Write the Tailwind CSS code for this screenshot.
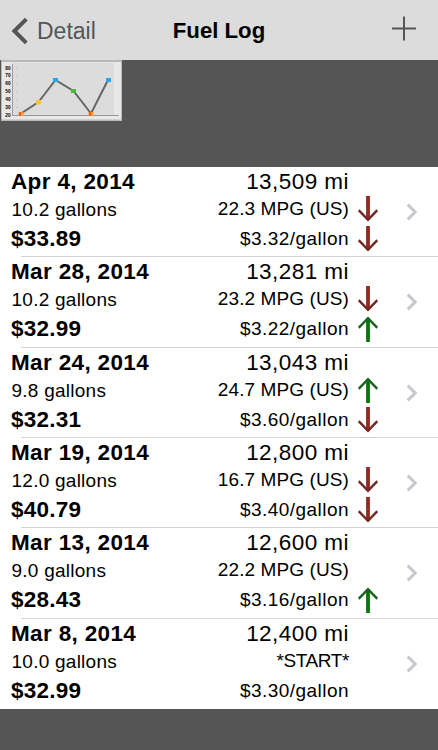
<!DOCTYPE html>
<html lang="en">
  <head>
    <meta charset="UTF-8" />
    <meta name="viewport" content="width=device-width, initial-scale=1.0" />
    <title>Fuel Log</title>
    <script src="https://cdn.jsdelivr.net/npm/@tailwindcss/browser@4"></script>
  </head>
  <body class="bg-[#555555] font-['Liberation_Sans',Arial,sans-serif] text-black h-[750px] overflow-hidden">
    <header class="grid grid-cols-[146px_146px_146px] h-[60px] bg-[#dcdcdc]">
      <a class="flex items-center pl-[11px] text-[#555555]">
        <svg class="w-[17px] h-[28px]" viewBox="0 0 17 28" fill="none" stroke="#555555" stroke-width="4">
          <path d="M15.3 2.2L3.4 14L15.3 25.8" />
        </svg>
        <span class="ml-[9px] text-[23px] leading-[60px]">Detail</span>
      </a>
      <h1 class="font-bold text-[22.2px] leading-[61px] text-center whitespace-nowrap">Fuel Log</h1>
      <button class="flex justify-end items-start pt-[16px] pr-[22px]">
        <svg class="w-[24px] h-[25px]" viewBox="0 0 24 25" stroke="#555555" stroke-width="2">
          <path d="M12 0.5V24.5M0 12.5H24" />
        </svg>
      </button>
    </header>
    <div class="h-[107px] pl-px">
      <!-- mileage chart thumbnail -->
      <svg class="block" width="121" height="61" viewBox="0 0 121 61">
        <rect x="0" y="0" width="121" height="61" fill="#b9b9b9" />
        <rect x="1" y="2" width="119" height="57.5" fill="#e8e8e8" />
        <rect x="11" y="3" width="102" height="52" fill="#dcdcdc" />
        <path d="M11.5 4V56M11 55.5H118" stroke="#999999" fill="none" />
        <path d="M15 7.5h2M15 15.5h2M15 23.5h2M15 31.5h2M15 39.5h2M15 47.5h2" stroke="#c4c4c4" />
        <g font-family="Liberation Sans, Arial, sans-serif" font-size="4.8" font-weight="bold" text-anchor="end">
          <text x="9.6" y="9.5">80</text>
          <text x="9.6" y="17.3">70</text>
          <text x="9.6" y="25.3">60</text>
          <text x="9.6" y="33.2">50</text>
          <text x="9.6" y="41.2">40</text>
          <text x="9.6" y="49.2">30</text>
          <text x="9.6" y="57">20</text>
        </g>
        <path d="M20 53.5L37.5 42L54.5 20L72.5 31L90 53.5L107 20" fill="none" stroke="#666666" stroke-width="2" />
        <g>
          <path d="M17.5 52h5v4h-5zM87.5 52h5v4h-5z" fill="#f79a2c" />
          <path d="M18 52h2v4h-2zM88 52h2v4h-2z" fill="#ee582c" />
          <path d="M35 40h5v4.5h-5z" fill="#f9c32b" />
          <path d="M52 18h5v4h-5zM105 18h5v4h-5z" fill="#26a5f2" />
          <path d="M70 29h5v4h-5z" fill="#45bd35" />
        </g>
      </svg>
    </div>
    <ul id="log" class="bg-white h-[542px]"></ul>
    <script>
      const entries = [
        { date: 'Apr 4, 2014', miles: '13,509', gallons: '10.2', mpg: '22.3 MPG (US)', total: '$33.89', price: '$3.32', trends: ['down', 'down'] },
        { date: 'Mar 28, 2014', miles: '13,281', gallons: '10.2', mpg: '23.2 MPG (US)', total: '$32.99', price: '$3.22', trends: ['down', 'up'] },
        { date: 'Mar 24, 2014', miles: '13,043', gallons: '9.8', mpg: '24.7 MPG (US)', total: '$32.31', price: '$3.60', trends: ['up', 'down'] },
        { date: 'Mar 19, 2014', miles: '12,800', gallons: '12.0', mpg: '16.7 MPG (US)', total: '$40.79', price: '$3.40', trends: ['down', 'down'] },
        { date: 'Mar 13, 2014', miles: '12,600', gallons: '9.0', mpg: '22.2 MPG (US)', total: '$28.43', price: '$3.16', trends: ['', 'up'] },
        { date: 'Mar 8, 2014', miles: '12,400', gallons: '10.0', mpg: '*START*', total: '$32.99', price: '$3.30', trends: ['', ''] },
      ];

      const arrows = {
        down: `<svg class="block" width="20" height="26" viewBox="0 0 20 26" fill="none">
          <path d="M10 0V24" stroke="#92281f" stroke-width="3.8" />
          <path d="M0.7 14.2L10 23.8L19.3 14.2" stroke="#702925" stroke-width="2.4" />
        </svg>`,
        up: `<svg class="block" width="20" height="26" viewBox="0 0 20 26" fill="none">
          <path d="M10 26V2" stroke="#087508" stroke-width="3.8" />
          <path d="M0.7 11.8L10 2.2L19.3 11.8" stroke="#1a6320" stroke-width="2.4" />
        </svg>`,
        '': '',
      };

      document.getElementById('log').innerHTML = entries.map((e, i) => `
        <li class="h-[90.33px]">
          <div class="flex h-[89.33px] pl-[11px]">
            <div class="w-[160px]">
              <p class="font-bold text-[22.5px] leading-[30px] tracking-[0.35px]">${e.date}</p>
              <p class="pl-[0.5px] text-[19px] leading-[25px] tracking-[0.25px]">${e.gallons} gallons</p>
              <p class="font-bold text-[22.5px] leading-[34px] tracking-[0.25px]">${e.total}</p>
            </div>
            <div class="w-[178px] text-right">
              <p class="text-[22.5px] leading-[29px] tracking-[0.45px]">${e.miles} mi</p>
              <p class="text-[19px] leading-[26px] ${e.mpg === '*START*' ? 'tracking-[-0.4px]' : 'tracking-[0.1px]'}">${e.mpg}</p>
              <p class="text-[19px] leading-[34px] tracking-[0.45px]">${e.price}/gallon</p>
            </div>
            <div class="w-[29px] pl-[9px] pt-[29px]">
              <div class="h-[30px]">${arrows[e.trends[0]]}</div>
              <div class="h-[30px]">${arrows[e.trends[1]]}</div>
            </div>
            <div class="pl-[28px] pt-[36px]">
              <svg width="12" height="18" viewBox="0 0 12 18" fill="none" stroke="#c7c7cc" stroke-width="3">
                <path d="M1.7 1.6L9.2 9L1.7 16.4" />
              </svg>
            </div>
          </div>
          ${i < entries.length - 1 ? '<div class="ml-[21px] h-px bg-[#d4d4d6]"></div>' : ''}
        </li>`).join('');
    </script>
  </body>
</html>
